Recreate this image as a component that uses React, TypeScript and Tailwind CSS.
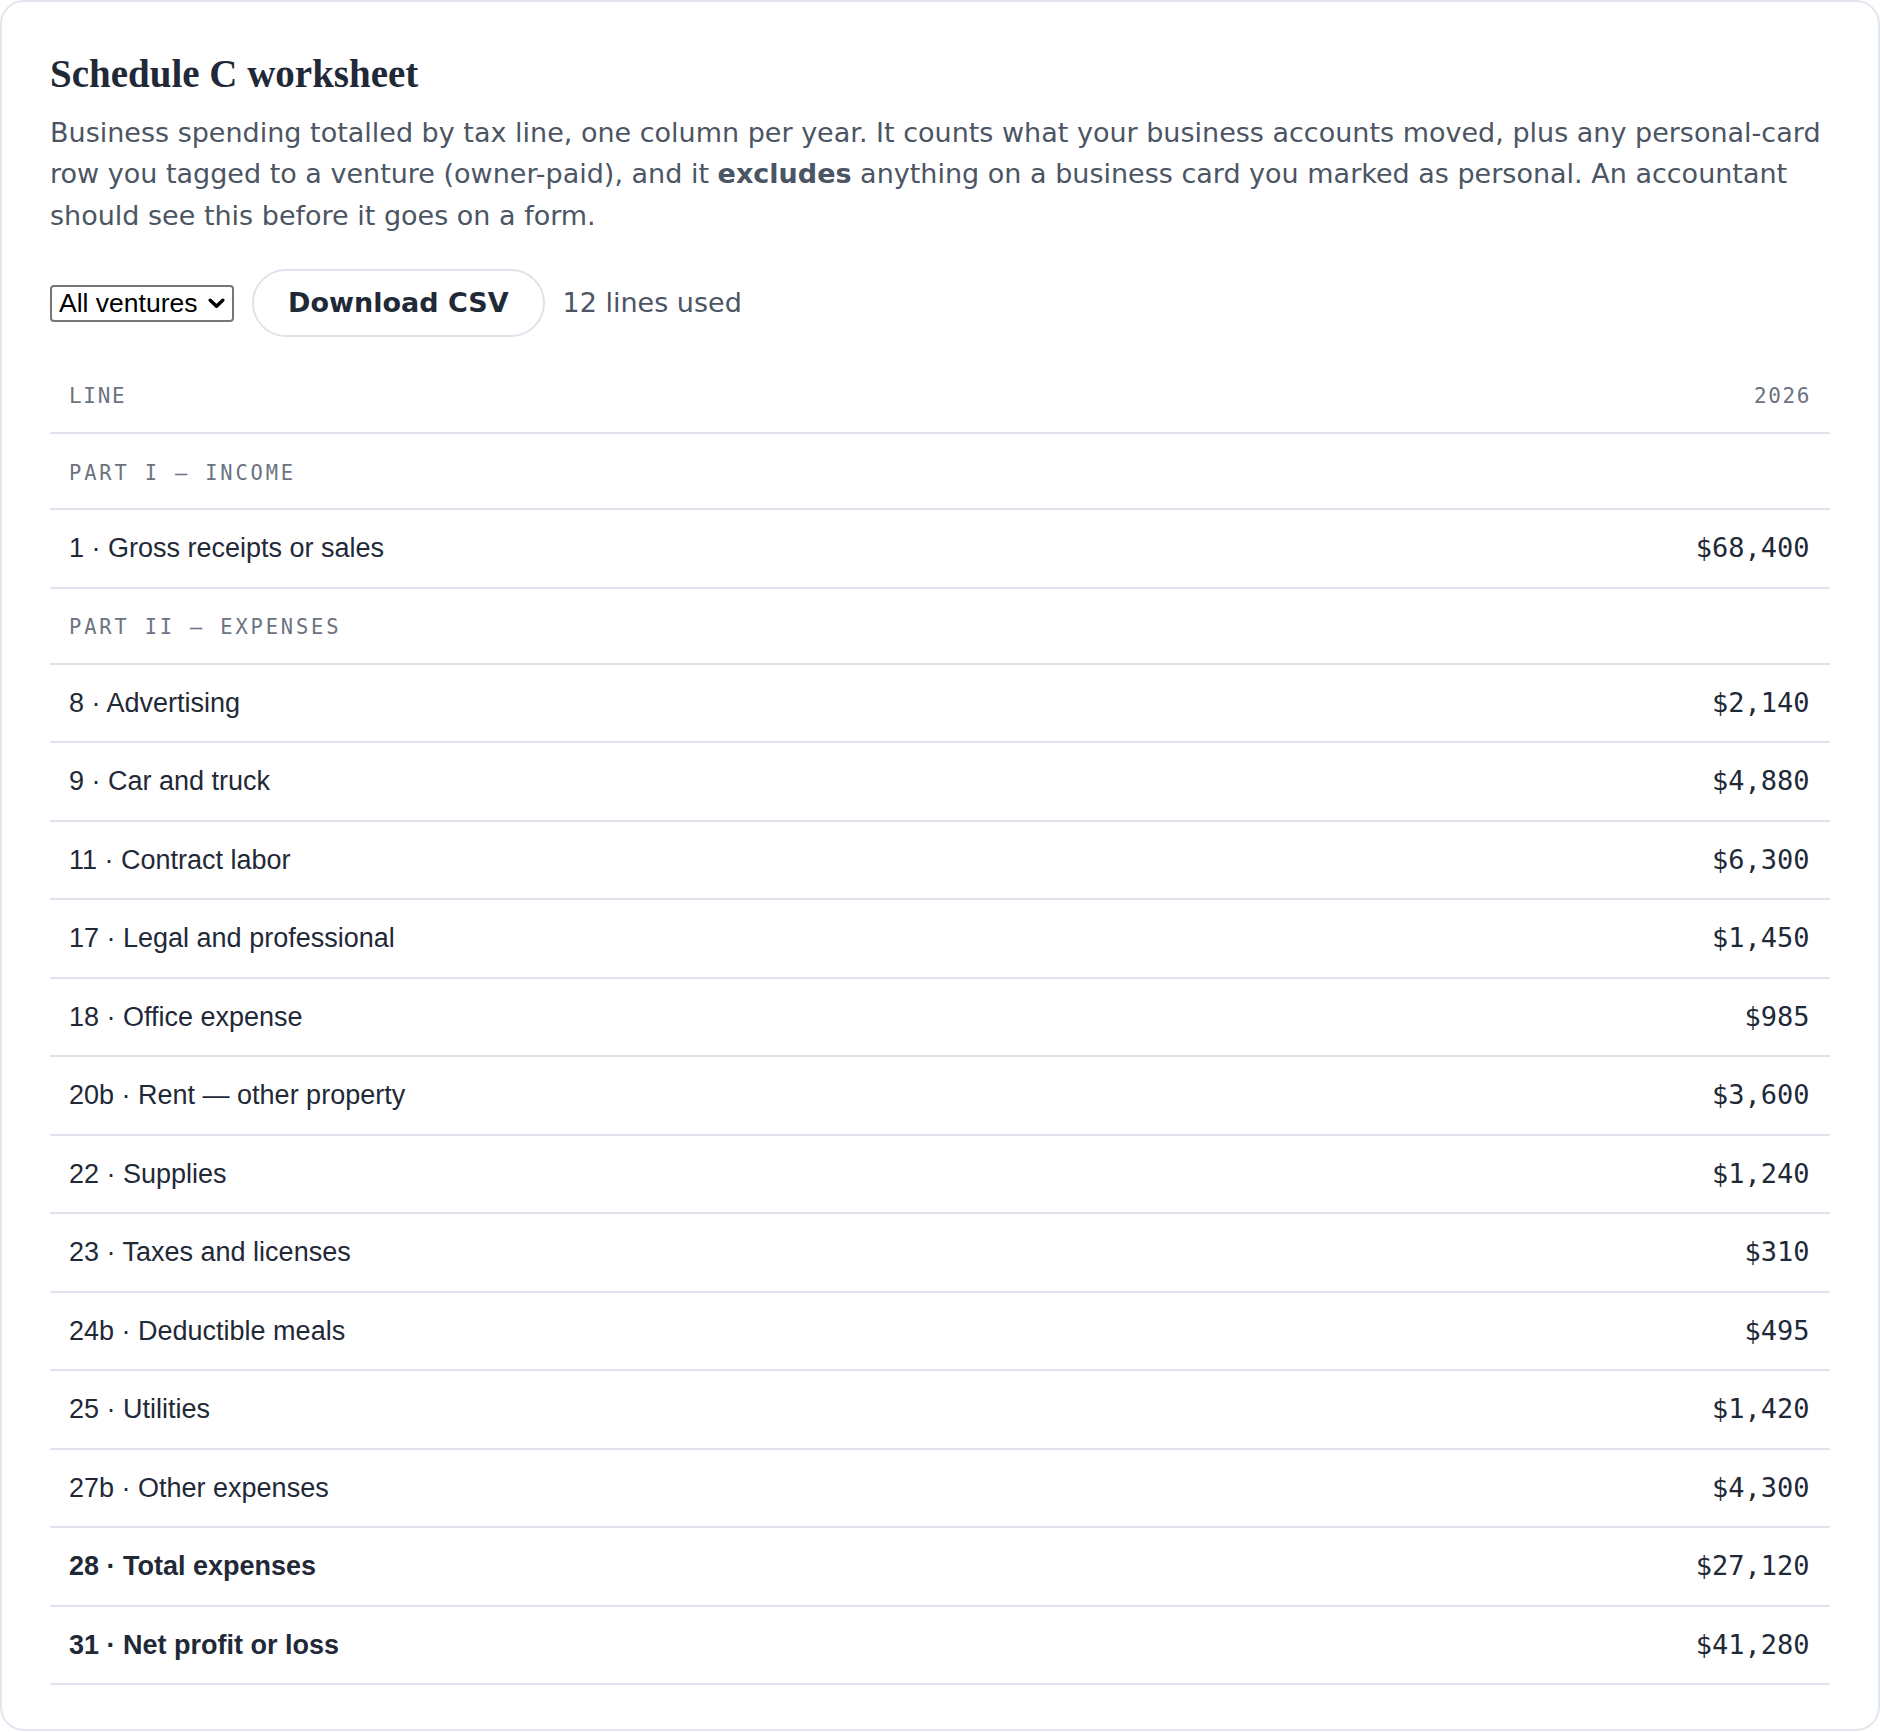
type Row =
  | { kind: "section"; label: string }
  | { kind: "line"; label: string; amount: string; total?: boolean };

const rows: Row[] = [
  { kind: "section", label: "Part I — Income" },
  { kind: "line", label: "1 · Gross receipts or sales", amount: "$68,400" },
  { kind: "section", label: "Part II — Expenses" },
  { kind: "line", label: "8 · Advertising", amount: "$2,140" },
  { kind: "line", label: "9 · Car and truck", amount: "$4,880" },
  { kind: "line", label: "11 · Contract labor", amount: "$6,300" },
  { kind: "line", label: "17 · Legal and professional", amount: "$1,450" },
  { kind: "line", label: "18 · Office expense", amount: "$985" },
  { kind: "line", label: "20b · Rent — other property", amount: "$3,600" },
  { kind: "line", label: "22 · Supplies", amount: "$1,240" },
  { kind: "line", label: "23 · Taxes and licenses", amount: "$310" },
  { kind: "line", label: "24b · Deductible meals", amount: "$495" },
  { kind: "line", label: "25 · Utilities", amount: "$1,420" },
  { kind: "line", label: "27b · Other expenses", amount: "$4,300" },
  { kind: "line", label: "28 · Total expenses", amount: "$27,120", total: true },
  { kind: "line", label: "31 · Net profit or loss", amount: "$41,280", total: true },
];

export default function App() {
  return (
    <div className="min-h-[1732px] bg-white">
      <section className="rounded-[24px] border-2 border-[#e3e6ee] bg-white px-[48px] pt-[48px] pb-[44px]">
        <h1 className="font-['Liberation_Serif',serif] text-[39px] leading-[48px] font-bold text-[#1f2937]">
          Schedule C worksheet
        </h1>
        <p className="mt-[14px] font-['DejaVu_Sans',sans-serif] text-[27px] leading-[41.4px] text-[#4b5563]">
          Business spending totalled by tax line, one column per year. It counts what your business
          accounts moved, plus any personal-card row you tagged to a venture (owner-paid), and it{" "}
          <strong className="font-bold">excludes</strong> anything on a business card you marked as
          personal. An accountant should see this before it goes on a form.
        </p>

        <div className="mt-[33px] flex items-center gap-[18px]">
          <div className="relative">
            <select className="h-[37px] w-[184px] appearance-none rounded-[4px] border-2 border-[#767676] bg-white pl-[7px] font-['Liberation_Sans',Arial,sans-serif] text-[26.5px] leading-none text-black">
              <option>All ventures</option>
            </select>
            <svg
              className="pointer-events-none absolute right-[9px] top-[13px]"
              width="17"
              height="11"
              viewBox="0 0 17 11"
              fill="none"
            >
              <path d="M2.2 2.2 L8.5 8.3 L14.8 2.2" stroke="#000" strokeWidth="3.4" strokeLinecap="round" strokeLinejoin="round" />
            </svg>
          </div>
          <button className="flex h-[68px] items-center rounded-full border-2 border-[#e1e3ec] bg-white px-[34px] font-['DejaVu_Sans',sans-serif] text-[27px] font-bold text-[#1f2937]">
            Download CSV
          </button>
          <span className="font-['DejaVu_Sans',sans-serif] text-[27px] text-[#4b5563]">12 lines used</span>
        </div>

        <div className="mt-[25px]">
          <div className="flex h-[72px] items-center justify-between border-b-2 border-[#e0e3eb] pl-[19px] pr-[20.5px] font-['DejaVu_Sans_Mono',monospace] text-[21px] uppercase tracking-[0.08em] text-[#6b7280]">
            <span>Line</span>
            <span className="-mr-[0.08em]">2026</span>
          </div>
          {rows.map((row) =>
            row.kind === "section" ? (
              <div
                key={row.label}
                className="flex h-[76px] items-center border-b-2 border-[#e0e3eb] pl-[19px] pr-[20.5px] pt-[4px] font-['DejaVu_Sans_Mono',monospace] text-[20.4px] uppercase tracking-[0.14em] text-[#6b7280]"
              >
                {row.label}
              </div>
            ) : (
              <div
                key={row.label}
                className="flex items-center justify-between border-b-2 border-[#e0e3eb] pl-[19px] pr-[20.5px] py-[18px] text-[27px] leading-[40.5px] text-[#1f2937]"
              >
                <span
                  className={
                    row.total
                      ? "font-['Liberation_Sans',Arial,sans-serif] font-bold"
                      : "font-['Liberation_Sans',Arial,sans-serif]"
                  }
                >
                  {row.label}
                </span>
                <span className="font-['DejaVu_Sans_Mono',monospace]">{row.amount}</span>
              </div>
            )
          )}
        </div>
      </section>
    </div>
  );
}
